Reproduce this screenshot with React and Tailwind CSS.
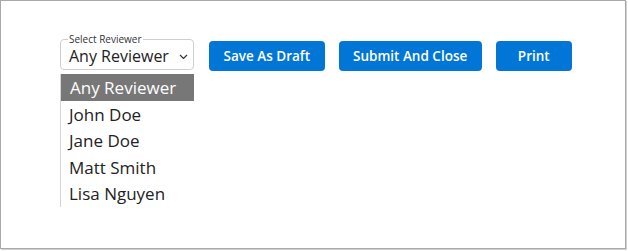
const reviewers = ['Any Reviewer', 'John Doe', 'Jane Doe', 'Matt Smith', 'Lisa Nguyen']

function ReviewerSelect() {
  return (
    <div className="relative h-[31px] w-[134px] rounded-[4px] border border-[#cfcfcf] bg-white">
      <span className="absolute -top-[7px] left-[7px] bg-white px-[1px] text-[10px] leading-[12px] text-[#333]">
        Select Reviewer
      </span>
      <div className="flex h-full items-center justify-between pl-[8px] pr-[5px] pt-[3px]">
        <span className="text-[16px] leading-none text-[#222]">Any Reviewer</span>
        <svg width="9" height="6" viewBox="0 0 9 6" className="mt-[1px]">
          <path d="M1 1l3.5 3.5L8 1" fill="none" stroke="#333" strokeWidth="1.2" />
        </svg>
      </div>
    </div>
  )
}

function ReviewerList() {
  return (
    <ul className="mt-[4px] w-[134px] border-l border-[#d4d4d4]">
      {reviewers.map((name, i) => (
        <li
          key={name}
          className={
            i === 0
              ? 'flex h-[27px] items-center bg-[#777] pl-[9px] text-[17px] font-medium text-white'
              : 'flex h-[26.5px] items-center pl-[8px] text-[17px] text-[#222]'
          }
        >
          {name}
        </li>
      ))}
    </ul>
  )
}

function Btn({ children, className = '' }) {
  return (
    <button
      className={
        'h-[30px] rounded-[4px] bg-[#0276d6] px-[14.5px] text-[13.5px] font-semibold text-white ' + className
      }
    >
      {children}
    </button>
  )
}

export default function App() {
  return (
    <div
      className="h-[251px] w-[628px] bg-white"
      style={{ fontFamily: '"Open Sans", "Noto Sans", sans-serif' }}
    >
      <div className="h-[249px] w-[626px] border border-[#a9a9a9] pl-[59px] pt-[38px] shadow-[1px_1px_0_#d0d0d0]">
        <div className="flex items-start">
          <div>
            <ReviewerSelect />
            <ReviewerList />
          </div>
          <div className="ml-[15px] mt-[2px] flex gap-[14px]">
            <Btn>Save As Draft</Btn>
            <Btn>Submit And Close</Btn>
            <Btn className="w-[76px]">Print</Btn>
          </div>
        </div>
      </div>
    </div>
  )
}
